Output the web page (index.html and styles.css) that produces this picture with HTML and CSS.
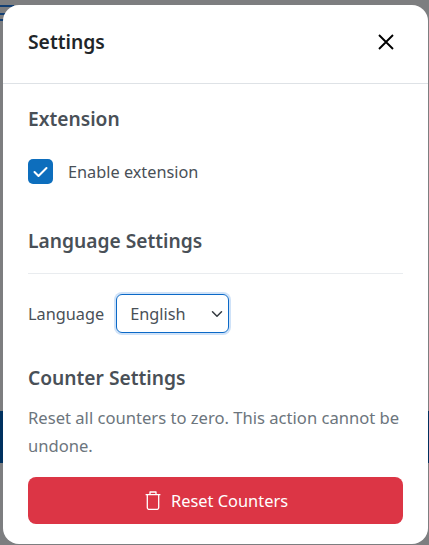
FILE: index.html
```html
<!DOCTYPE html>
<html lang="en">
<head>
<meta charset="utf-8">
<title>Settings</title>
<link rel="stylesheet" href="styles.css">
</head>
<body>
<div class="edge-left"></div>
<div class="edge-right"></div>
<div class="edge-stripes"></div>
<main class="modal">
  <header class="modal-header">
    <h1 class="modal-title">Settings</h1>
    <button class="close" aria-label="Close">
      <svg viewBox="0 0 16 16" width="16" height="16"><path d="M1 1L15 15M15 1L1 15" stroke="#000" stroke-width="1.9" fill="none"/></svg>
    </button>
  </header>
  <div class="modal-body">
    <h2 class="section-title">Extension</h2>
    <label class="check-row">
      <span class="checkbox"><svg viewBox="0 0 25 25" width="25" height="25"><path d="M6.5 13L10.5 17L18.5 9" stroke="#fff" stroke-width="2" fill="none" stroke-linecap="round" stroke-linejoin="round"/></svg></span>
      <span class="check-label">Enable extension</span>
    </label>
    <h2 class="section-title lang-title">Language Settings</h2>
    <hr class="rule">
    <div class="lang-row">
      <span class="lang-label">Language</span>
      <div class="select">
        <span>English</span>
        <svg viewBox="0 0 16 16" width="12" height="12"><path d="M2 5l6 6 6-6" stroke="#343a40" stroke-width="2" fill="none" stroke-linecap="round" stroke-linejoin="round"/></svg>
      </div>
    </div>
    <h2 class="section-title counter-title">Counter Settings</h2>
    <p class="note">Reset all counters to zero. This action cannot be undone.</p>
    <button class="reset">
      <svg viewBox="0 0 16 19" width="16" height="19"><path d="M5 3.5V1h6v2.5M.6 3.6h14.8M2.3 3.6V16.6a1.8 1.8 0 0 0 1.8 1.8h7.8a1.8 1.8 0 0 0 1.8-1.8V3.6" stroke="#fff" stroke-width="1.3" fill="none" stroke-linejoin="round"/></svg>
      <span>Reset Counters</span>
    </button>
  </div>
</main>
</body>
</html>
```
FILE: styles.css
```css
* { box-sizing: border-box; }
html, body { margin: 0; height: 100%; }
body {
  width: 429px;
  height: 545px;
  overflow: hidden;
  position: relative;
  background: #7d7e80;
  padding: 5px 1px 1px 3px;
  font-family: "Noto Sans", "Open Sans", sans-serif;
}
.edge-left {
  position: absolute; left: 0; top: 411px; width: 3px; height: 52px; background: #00315f;
}
.edge-right {
  position: absolute; right: 0; top: 411px; width: 1px; height: 52px; background: #00315f;
}
.edge-stripes {
  position: absolute; left: 0; top: 5px; width: 14px; height: 2px; background: #123f73;
  box-shadow: 0 8px 0 #123f73, 0 14px 0 #123f73;
}
.modal {
  position: relative;
  height: 539px;
  background: #fff;
  border-radius: 16px;
  overflow: hidden;
}
.modal-header {
  height: 79px;
  border-bottom: 1px solid #dee2e6;
  display: flex;
  align-items: center;
  justify-content: space-between;
  padding: 0 34px 4px 25px;
}
.modal-title {
  margin: 0;
  font-size: 19.3px;
  line-height: 24px;
  font-weight: 600;
  color: #212529;
}
.close {
  border: 0; background: none; padding: 0; width: 16px; height: 16px; display: block;
}
.close svg { display: block; }
.modal-body { padding: 23px 25px 0; }
.section-title {
  margin: 0;
  font-size: 19.2px;
  line-height: 24px;
  font-weight: 600;
  color: #495057;
}
.check-row {
  display: flex;
  align-items: center;
  gap: 15px;
  margin-top: 28px;
}
.checkbox {
  width: 25px; height: 25px;
  border-radius: 5px;
  background: #0d6ebd;
  display: block;
}
.checkbox svg { display: block; }
.check-label, .lang-label {
  font-size: 16.3px; line-height: 24px; color: #495057;
}
.lang-title { margin-top: 45px; }
.rule {
  margin: 20px 0 0;
  border: 0;
  border-top: 1px solid #e9ecef;
}
.lang-row {
  display: flex;
  align-items: center;
  gap: 12px;
  margin-top: 20px;
}
.select {
  width: 113px;
  height: 39px;
  border: 1px solid #0b69c7;
  border-radius: 6px;
  box-shadow: 0 0 0 2px #cfe2f8;
  padding: 0 5px 0 13px;
  display: flex;
  align-items: center;
  justify-content: space-between;
  font-size: 16.3px;
  color: #495057;
}
.counter-title { margin-top: 33px; }
.note {
  margin: 14px 0 0;
  font-size: 16.6px;
  line-height: 28px;
  color: #6c757d;
}
.reset {
  margin-top: 17px;
  width: 100%;
  height: 47px;
  border: 0;
  border-radius: 8px;
  background: #dc3545;
  color: #fff;
  font: inherit;
  font-size: 16.4px;
  padding: 0 0 0 2px;
  display: flex;
  align-items: center;
  justify-content: center;
  gap: 10px;
}
```
